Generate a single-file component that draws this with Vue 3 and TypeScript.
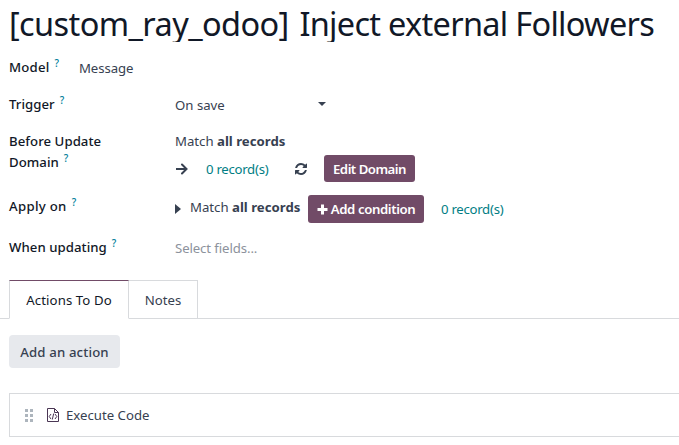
<script setup lang="ts">
import { ref } from 'vue'

const tabs: string[] = ['Actions To Do', 'Notes']
const activeTab = ref(0)
</script>

<template>
  <main class="form">
    <h1 class="title"><span class="module">[custom_ray_odoo]</span> Inject external Followers</h1>

    <section class="row model">
      <div class="label">Model<sup>?</sup></div>
      <div class="value">Message</div>
    </section>

    <section class="row trigger">
      <div class="label">Trigger<sup>?</sup></div>
      <div class="value select">
        <span class="selected">On save</span>
        <svg class="caret" viewBox="0 0 8 4"><path d="M0 0h8L4 4z" /></svg>
      </div>
    </section>

    <section class="row before">
      <div class="label">Before Update<br />Domain<sup>?</sup></div>
      <div class="value">
        <div>Match <b>all records</b></div>
        <div class="tools">
          <svg class="arrow" viewBox="0 0 12 12"><path d="M0.500 6h10M6 1.500L10.500 6 6 10.500" /></svg>
          <span class="records">0 record(s)</span>
          <svg class="refresh" viewBox="0 0 1536 1536">
            <path d="M1511 928q0 5-1 7-64 268-268 434.500T764 1536q-146 0-282.500-55T238 1324l-129 129q-19 19-45 19t-45-19-19-45V960q0-26 19-45t45-19h448q26 0 45 19t19 45-19 45l-137 137q71 66 161 102t187 36q134 0 250-65t186-179q11-17 53-117 8-23 30-23h192q13 0 22.500 9.500t9.500 22.500zm25-800v448q0 26-19 45t-45 19h-448q-26 0-45-19t-19-45 19-45l138-138Q969 256 768 256q-134 0-250 65T332 500q-11 17-53 117-8 23-30 23H50q-13 0-22.500-9.500T18 608v-7q65-268 270-434.500T768 0q146 0 284 55.500T1297 212l130-129q19-19 45-19t45 19 19 45z" />
          </svg>
          <button class="primary edit">Edit Domain</button>
        </div>
      </div>
    </section>

    <section class="row apply">
      <div class="label">Apply on<sup>?</sup></div>
      <div class="value apply-value">
        <svg class="disclosure" viewBox="0 0 6 10"><path d="M0 0l6 5-6 5z" /></svg>
        <span class="match">Match <b>all records</b></span>
        <button class="primary add">
          <svg class="plus" viewBox="0 0 11 11"><path d="M4 0.500h3V4h3.500v3H7v3.500H4V7H0.500V4H4z" /></svg>
          <span>Add condition</span>
        </button>
        <span class="records">0 record(s)</span>
      </div>
    </section>

    <section class="row when">
      <div class="label">When updating<sup>?</sup></div>
      <div class="value placeholder">Select fields...</div>
    </section>

    <nav class="tabs">
      <button
        v-for="(tab, i) in tabs"
        :key="tab"
        class="tab"
        :class="{ active: activeTab === i }"
        @click="activeTab = i"
      >
        {{ tab }}
      </button>
    </nav>

    <button class="secondary">Add an action</button>

    <article class="card">
      <svg class="grip" viewBox="0 0 8 13">
        <path d="M0 0h3v3H0zM5 0h3v3H5zM0 5h3v3H0zM5 5h3v3H5zM0 10h3v3H0zM5 10h3v3H5z" />
      </svg>
      <svg class="file" viewBox="0 0 12 14">
        <path d="M0.500 0.500h7l4 4v9h-11zM7.500 0.500v4h4" />
        <path d="M4 6L2.200 8.500 4 11M8 6l1.800 2.500L8 11M6.700 5.500l-1.400 6" />
      </svg>
      <span>Execute Code</span>
    </article>
  </main>
</template>

<style>
body {
  margin: 0;
  background: #fff;
}
</style>

<style scoped>
.form {
  box-sizing: border-box;
  width: 679px;
  height: 445px;
  overflow: hidden;
  font: 13.2px/21px 'Noto Sans', 'Open Sans', sans-serif;
  color: #374151;
  white-space: nowrap;
}
.title {
  margin: 0 0 0 9px;
  height: 42px;
  overflow: hidden;
  font-size: 32.5px;
  line-height: 48px;
  font-weight: 400;
  letter-spacing: -0.7px;
  color: #111827;
}
.module {
  margin-right: 3px;
  letter-spacing: -0.6px;
}
.row {
  display: grid;
  grid-template-columns: 166px 1fr;
  margin-left: 9px;
}
.label {
  font-weight: 500;
  letter-spacing: 0.05px;
  color: #111827;
}
sup {
  margin-left: 5px;
  font-size: 10px;
  line-height: 0;
  font-weight: 500;
  vertical-align: 5px;
  color: #017e9b;
}
b {
  font-weight: 700;
}
svg {
  display: block;
  flex: none;
  fill: currentColor;
}
.model {
  grid-template-columns: 70px 1fr;
  padding-top: 15px;
}
.model .label {
  letter-spacing: 0.2px;
}
.model .value,
.trigger .value,
.when .value {
  padding-top: 1px;
}
.model .value {
  letter-spacing: -0.1px;
}
.trigger {
  padding-top: 15px;
}
.select {
  display: flex;
  align-items: center;
  justify-content: space-between;
  width: 151px;
}
.caret {
  width: 8px;
  height: 4px;
  margin-top: -3px;
}
.before {
  padding-top: 15px;
}
.tools {
  display: flex;
  align-items: center;
  height: 27px;
  margin-top: 3px;
}
.arrow {
  width: 12px;
  height: 12px;
  margin: 0 18px 0 1px;
  fill: none;
  stroke: currentColor;
  stroke-width: 2;
  stroke-linecap: round;
}
.records {
  color: #017e84;
  letter-spacing: -0.28px;
}
.tools .records {
  width: 89px;
  padding-top: 1px;
}
.refresh {
  width: 12px;
  height: 12px;
  margin-right: 17px;
}
button {
  box-sizing: border-box;
  padding: 0;
  border: 0;
  font: inherit;
  color: inherit;
  background: none;
}
.primary {
  display: flex;
  align-items: center;
  justify-content: center;
  height: 27px;
  border-radius: 3px;
  background: #714b67;
  color: #fff;
  font-weight: 600;
}
.edit {
  width: 91px;
  padding-top: 1px;
  letter-spacing: -0.5px;
}
.apply {
  padding-top: 13px;
}
.apply .label {
  padding-top: 1px;
  letter-spacing: 0.3px;
}
.apply-value {
  display: flex;
  align-items: center;
  height: 28px;
}
.match {
  width: 118px;
  margin-top: -3px;
}
.disclosure {
  width: 6px;
  height: 10px;
  margin-right: 9px;
}
.add {
  width: 116px;
  height: 28px;
  margin-right: 17px;
  letter-spacing: -0.38px;
}
.plus {
  width: 11px;
  height: 11px;
  margin-right: 3px;
}
.when {
  padding-top: 14px;
}
.placeholder {
  color: #8c929c;
  letter-spacing: -0.1px;
}
.tabs {
  display: flex;
  height: 39px;
  margin-top: 21px;
  padding-left: 9px;
  box-shadow: inset 0 -1px #d8dadd;
}
.tab {
  width: 69px;
  height: 39px;
  padding-top: 1px;
  border: 1px solid #d8dadd;
  border-left: 0;
}
.tab.active {
  width: 120px;
  border-left: 1px solid #d8dadd;
  border-top-color: #714b67;
  border-bottom-color: #fff;
  background: #fff;
  color: #111827;
  letter-spacing: 0.1px;
}
.secondary {
  display: block;
  width: 111px;
  height: 33px;
  margin: 16px 0 0 9px;
  padding-top: 1px;
  border-radius: 4px;
  background: #e7e9ed;
  font-weight: 500;
  letter-spacing: 0.15px;
}
.card {
  box-sizing: border-box;
  display: flex;
  align-items: center;
  height: 44px;
  margin: 25px 0 0 9px;
  padding-left: 15px;
  border: 1px solid #d8dadd;
  border-right: 0;
}
.grip {
  width: 8px;
  height: 13px;
  margin-right: 14px;
  color: #adb5bd;
}
.file {
  width: 12px;
  height: 14px;
  margin-right: 7px;
  fill: none;
  stroke: #4a3654;
}
</style>
